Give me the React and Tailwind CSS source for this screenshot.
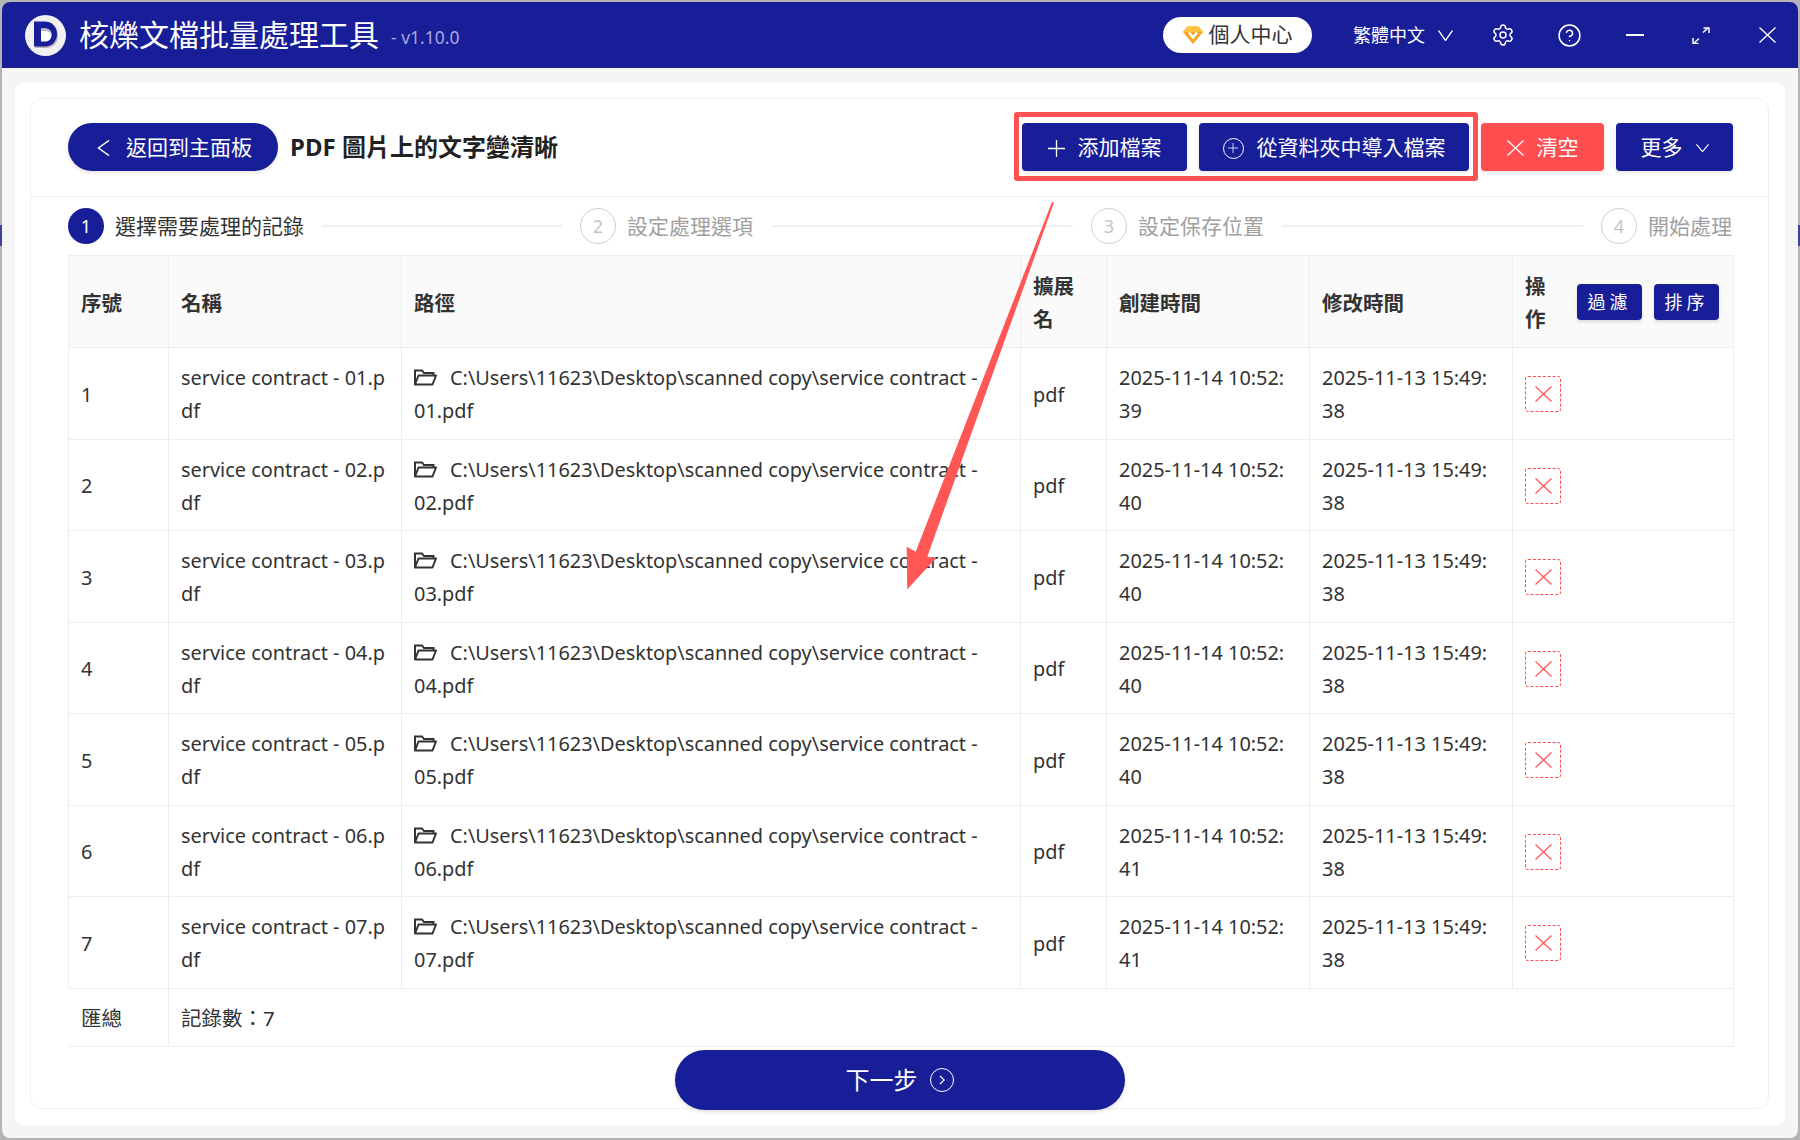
import { CircleHelp, Settings } from 'lucide-react'

const cjk = { fontFamily: '"Noto Sans", "Noto Sans CJK TC", sans-serif' }

const rows = [
  { id: 1, created: '39' },
  { id: 2, created: '40' },
  { id: 3, created: '40' },
  { id: 4, created: '40' },
  { id: 5, created: '40' },
  { id: 6, created: '41' },
  { id: 7, created: '41' },
]

function FolderIcon() {
  return (
    <svg viewBox="0 0 23 17" className="h-[17px] w-[23px] shrink-0" fill="none" stroke="#333" strokeWidth="2">
      <path d="M1 15.500V1.500h7l2 2.500h9.500v2.500" />
      <path d="M1 15.500 4.500 6.500H22l-3.500 9z" strokeLinejoin="round" />
    </svg>
  )
}

function Logo() {
  return (
    <svg viewBox="0 0 41 41" className="h-[41px] w-[41px] shrink-0">
      <circle cx="20.500" cy="20.500" r="20.500" fill="#f1f1f1" />
      <path d="M10 8h11c7 0 12 5 12 12.500S28 33 21 33H10z" fill="#b5b5b5" />
      <path d="M9 6.500h11c7 0 12 5.500 12 12.500s-5 12.500-12 12.500H9z" fill="#181e98" />
      <path d="M16 13.500h4c4 0 6.500 2.500 6.500 6.500s-2.500 6.500-6.500 6.500h-4z" fill="#fff" />
      <path d="M16 13.500h4c4 0 6.500 2.500 6.500 6.500-1.500-3-3.500-4-6.500-4h-4z" fill="#b9b9c9" />
    </svg>
  )
}

function GemIcon() {
  return (
    <svg viewBox="0 0 20 18" className="h-[18px] w-5 shrink-0">
      <path d="M4.500.5h11L20 6 10 18 0 6z" fill="#f7a41f" strokeLinejoin="round" />
      <path d="M4.500.5h11L20 6H0z" fill="#ffc23d" />
      <path d="M6 6.500 10 11.500l4-5" fill="none" stroke="#fff" strokeWidth="2.400" />
    </svg>
  )
}

function ExpandIcon() {
  return (
    <svg viewBox="0 0 18 17" className="h-[17px] w-[18px]" fill="none" stroke="#fff" strokeWidth="1.500">
      <path d="M11 5.500 16 1M2 16l5-4.500" />
      <path d="M11.500 1H17v5M1 11v5.500h5.500" />
    </svg>
  )
}

function CrossIcon({ className = 'h-[16px] w-[17px]' }) {
  return (
    <svg viewBox="0 0 17 16" className={`shrink-0 ${className}`} fill="none" stroke="currentColor" strokeWidth="1.300">
      <path d="M.5.500l16 15M16.500.500l-16 15" />
    </svg>
  )
}

function PlusIcon({ className = 'h-[17px] w-[17px]' }) {
  return (
    <svg viewBox="0 0 17 17" className={`shrink-0 ${className}`} fill="none" stroke="currentColor" strokeWidth="1.300">
      <path d="M8.500 0v17M0 8.500h17" />
    </svg>
  )
}

function ChevronIcon({ className = 'h-[11px] w-[15px]' }) {
  return (
    <svg viewBox="0 0 15 10" preserveAspectRatio="none" className={`shrink-0 ${className}`} fill="none" stroke="currentColor" strokeWidth="1.300">
      <path d="M.5.500 7.500 9.500l7-9" />
    </svg>
  )
}

function HeaderButton({ children, className = '' }) {
  return (
    <button className={`flex h-12 items-center justify-center gap-[13px] rounded bg-[#181e98] pt-[2px] text-[21px] text-white shadow-[0_2px_4px_rgba(0,0,0,0.1)] ${className}`}>
      {children}
    </button>
  )
}

function Step({ number, label, active = false }) {
  return (
    <div className="flex shrink-0 items-center gap-[11px]">
      <span
        className={
          active
            ? 'flex h-9 w-9 items-center justify-center rounded-full bg-[#181e98] text-lg text-white'
            : 'flex h-9 w-9 items-center justify-center rounded-full border border-[#cfcfcf] text-lg text-[#c4c4c4]'
        }
      >
        {number}
      </span>
      <span className={active ? 'pt-[2px] text-[21px] text-[#333]' : 'pt-[2px] text-[21px] text-[#a0a0a0]'}>{label}</span>
    </div>
  )
}

export default function App() {
  return (
    <div className="relative h-[1140px] w-[1800px] overflow-hidden bg-[#b4b4b4] p-[2px]" style={cjk}>
      <span className="absolute left-0 top-[225px] h-[21px] w-[2px] bg-[#3c429a]" />
      <span className="absolute right-0 top-[225px] h-[21px] w-[2px] bg-[#3c429a]" />
      <div className="relative flex h-full flex-col overflow-hidden rounded-lg bg-[#f5f5f5]">
        <header className="flex h-[66px] shrink-0 items-center bg-[#181e98] pl-[23px] pr-[22px] text-white">
          <Logo />
          <span className="ml-[13px] text-[30px] leading-none">核爍文檔批量處理工具</span>
          <span className="ml-3 mt-1 text-[17.5px] text-[#a6a9dc]">- v1.10.0</span>
          <div className="ml-auto flex h-9 w-[149px] items-center justify-center gap-[6px] rounded-full bg-white text-[21px] text-[#333]">
            <GemIcon />
            個人中心
          </div>
          <span className="ml-[41px] text-lg">繁體中文</span>
          <ChevronIcon className="ml-[13px] h-[11px] w-[15px]" />
          <Settings className="ml-[38px] h-6 w-6" strokeWidth={1.5} />
          <CircleHelp className="ml-[42px] h-[25px] w-[25px]" strokeWidth={1.4} />
          <span className="ml-[44px] h-[2px] w-[18px] bg-white" />
          <span className="ml-[48px]"><ExpandIcon /></span>
          <CrossIcon className="ml-[49px] h-[16px] w-[17px]" />
        </header>

        <main className="mx-[13px] mb-[13px] mt-[15px] min-h-0 flex-1 rounded-lg bg-white pb-4 pl-[15px] pr-4 pt-[15px]">
          <section className="flex h-full flex-col rounded-xl border border-[#f0f0f0]">
            <div className="flex h-[98px] shrink-0 items-start border-b border-[#eeeeee] pl-[37px] pr-[35px] pt-6">
              <button className="flex h-12 w-[210px] items-center justify-start gap-4 rounded-full bg-[#181e98] pl-[29px] pt-[2px] text-[21px] text-white shadow-[0_2px_4px_rgba(0,0,0,0.1)]">
                <svg viewBox="0 0 13 16" className="h-4 w-[13px] shrink-0" fill="none" stroke="currentColor" strokeWidth="1.500">
                  <path d="M12 .5 1.500 8 12 15.500" />
                </svg>
                返回到主面板
              </button>
              <h1 className="ml-3 flex h-12 items-center text-2xl font-bold text-[#222]">PDF 圖片上的文字變清晰</h1>
              <div className="ml-auto flex gap-3">
                <HeaderButton className="w-[165px]">
                  <PlusIcon />
                  添加檔案
                </HeaderButton>
                <HeaderButton className="w-[270px]">
                  <span className="flex h-[21px] w-[21px] items-center justify-center rounded-full border-[1.5px] border-white">
                    <PlusIcon className="h-[10px] w-[10px]" />
                  </span>
                  從資料夾中導入檔案
                </HeaderButton>
                <button className="flex h-12 w-[123px] items-center justify-center gap-[13px] rounded bg-[#ff4d50] pt-[2px] text-[21px] text-white shadow-[0_2px_4px_rgba(0,0,0,0.1)]">
                  <CrossIcon />
                  清空
                </button>
                <HeaderButton className="w-[117px]">
                  更多
                  <ChevronIcon className="h-2 w-[13px]" />
                </HeaderButton>
              </div>
            </div>

            <div className="flex h-[58px] shrink-0 items-center pl-[37px] pr-9">
              <Step number="1" label="選擇需要處理的記錄" active />
              <span className="mx-[18px] h-[2px] w-[240px] bg-[#f0f0f0]" />
              <Step number="2" label="設定處理選項" />
              <span className="mx-[18px] h-[2px] w-[302px] bg-[#f0f0f0]" />
              <Step number="3" label="設定保存位置" />
              <span className="mx-[18px] h-[2px] w-[301px] bg-[#f0f0f0]" />
              <Step number="4" label="開始處理" />
            </div>

            <div className="ml-[37px] mr-9">
              <table className="w-[1665px] table-fixed border-collapse text-[19.9px] leading-[33px] text-[#333]">
                <colgroup>
                  <col className="w-[100px]" />
                  <col className="w-[233px]" />
                  <col className="w-[619px]" />
                  <col className="w-[86px]" />
                  <col className="w-[203px]" />
                  <col className="w-[203px]" />
                  <col className="w-[221px]" />
                </colgroup>
                <thead>
                  <tr className="h-[92px] bg-[#fafafa] text-[20.5px]">
                    <th className="border border-[#eeeeee] px-3 pt-[3px] text-left font-bold">序號</th>
                    <th className="border border-[#eeeeee] px-3 pt-[3px] text-left font-bold">名稱</th>
                    <th className="border border-[#eeeeee] px-3 pt-[3px] text-left font-bold">路徑</th>
                    <th className="border border-[#eeeeee] px-3 pt-[3px] text-left font-bold">擴展名</th>
                    <th className="border border-[#eeeeee] px-3 pt-[3px] text-left font-bold">創建時間</th>
                    <th className="border border-[#eeeeee] px-3 pt-[3px] text-left font-bold">修改時間</th>
                    <th className="border border-[#eeeeee] px-3 text-left font-bold">
                      <div className="flex items-center">
                        <span className="w-[21px] pt-[3px]">操作</span>
                        <button className="ml-[31px] h-9 w-[65px] rounded bg-[#181e98] text-lg font-normal tracking-[4px] text-white shadow-[0_2px_3px_rgba(0,0,0,0.12)]">過濾</button>
                        <button className="ml-3 h-9 w-[65px] rounded bg-[#181e98] text-lg font-normal tracking-[4px] text-white shadow-[0_2px_3px_rgba(0,0,0,0.12)]">排序</button>
                      </div>
                    </th>
                  </tr>
                </thead>
                <tbody>
                  {rows.map((row) => {
                    const index = `0${row.id}`
                    return (
                      <tr key={row.id} className="h-[91.5px]">
                        <td className="border border-[#eeeeee] px-3 pt-[2px]">{row.id}</td>
                        <td className="break-all border border-[#eeeeee] px-3 pt-[2px]">service contract - {index}.pdf</td>
                        <td className="border border-[#eeeeee] px-3 pt-[2px]">
                          <span className="mr-[13px] inline-block align-[-1px]"><FolderIcon /></span>
                          C:\Users\11623\Desktop\scanned copy\service contract - {index}.pdf
                        </td>
                        <td className="border border-[#eeeeee] px-3 pt-[2px]">pdf</td>
                        <td className="border border-[#eeeeee] px-3 pt-[2px]">2025-11-14 10:52:<wbr />{row.created}</td>
                        <td className="border border-[#eeeeee] px-3 pt-[2px]">2025-11-13 15:49:<wbr />38</td>
                        <td className="border border-[#eeeeee] px-3 pt-[2px]">
                          <button className="flex h-9 w-9 items-center justify-center rounded-[3px] border border-dashed border-[#ff4d50] text-[#ff5a5d]">
                            <CrossIcon />
                          </button>
                        </td>
                      </tr>
                    )
                  })}
                  <tr className="h-[58px] text-[20.5px]">
                    <td className="border border-b-[#eeeeee] border-l-transparent border-r-[#eeeeee] border-t-[#eeeeee] px-3 pt-[2px]">匯總</td>
                    <td colSpan={6} className="border border-[#eeeeee] px-3 pt-[2px]">記錄數：7</td>
                  </tr>
                </tbody>
              </table>
            </div>

            <button className="mx-auto mt-[3px] flex h-[60px] w-[450px] shrink-0 items-center justify-center gap-3 rounded-full bg-[#181e98] text-2xl text-white shadow-[0_2px_4px_rgba(0,0,0,0.12)]">
              下一步
              <span className="flex h-6 w-6 items-center justify-center rounded-full border-[1.5px] border-white">
                <svg viewBox="0 0 7 12" className="h-[10px] w-[6px]" fill="none" stroke="currentColor" strokeWidth="1.500">
                  <path d="M1 1l5 5-5 5" />
                </svg>
              </span>
            </button>
          </section>
        </main>
      </div>

      <div className="absolute left-[1014px] top-[112px] h-[69px] w-[464px] rounded-[3px] border-[5px] border-[#ff5252]" />
      <svg className="absolute left-0 top-0 h-[1140px] w-[1800px]" viewBox="0 0 1800 1140" fill="#ff5656">
        <path d="M1052 202l2 .6L927.300 556.700l8.700 1.600-28.700 31-.6-42.600 9 5z" />
      </svg>
    </div>
  )
}
